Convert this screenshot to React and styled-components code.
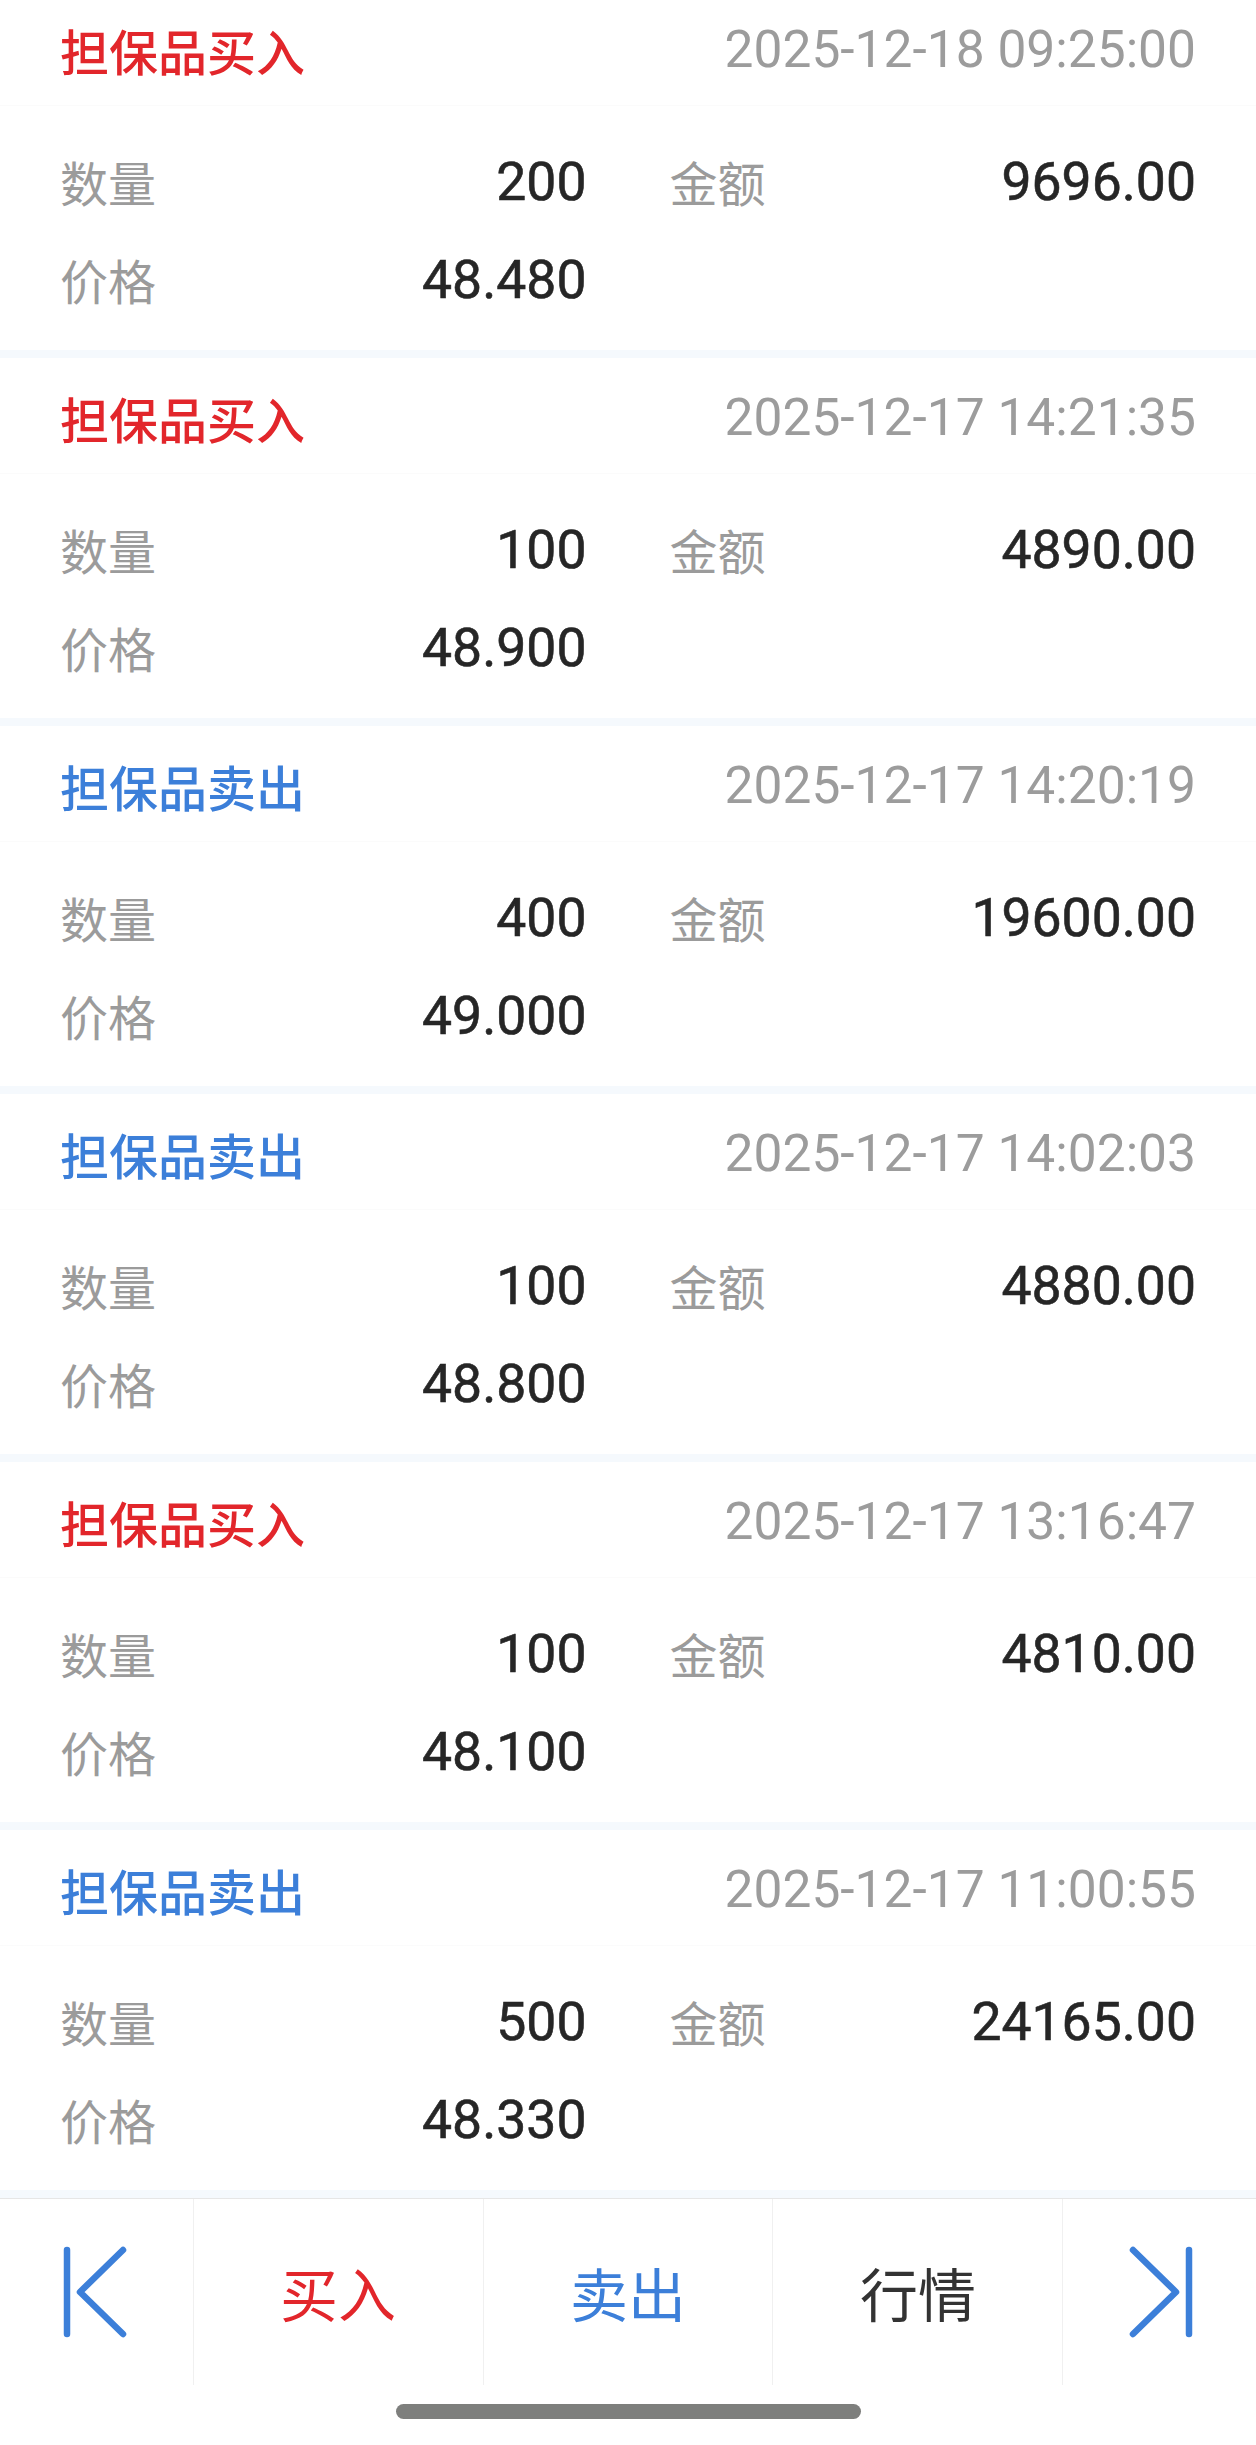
import React from 'react';
import styled, { createGlobalStyle } from 'styled-components';

const RED = '#e2262b';
const BLUE = '#3c7fd9';

const GlobalStyle = createGlobalStyle`
  html, body {
    margin:0;
    padding:0;
    background:#fff;
  }
  body {
    font-family:Roboto, "Noto Sans CJK SC", sans-serif;
  }
`;

const Screen = styled.div`
  width:1256px;
  height:2445px;
  overflow:hidden;
  background:#fff;
  display:flex;
  flex-direction:column;
`;

const List = styled.div`
  margin-top:-10px;
  display:flex;
  flex-direction:column;
  gap:8px;
  padding-bottom:8px;
  background:#f5f9fd;
`;

const Card = styled.div`
  height:360px;
  background:#fff;
  display:flex;
  flex-direction:column;
  box-sizing:border-box;
`;

const CardHead = styled.div`
  height:116px;
  box-sizing:border-box;
  padding:4px 60px 0;
  display:flex;
  align-items:center;
  justify-content:space-between;
  border-bottom:1px solid #fbfbfb;
`;

const Kind = styled.div`
  font-family:"Noto Sans CJK SC", sans-serif;
  font-size:49px;
  font-weight:500;
  color:${p => p.$sell ? BLUE : RED};
`;

const Time = styled.div`
  font-family:Roboto, sans-serif;
  font-size:51.5px;
  color:#9c9c9c;
`;

const CardBody = styled.div`
  padding:26px 60px 0;
  display:grid;
  grid-template-columns:1fr 1fr;
  column-gap:83px;
  grid-auto-rows:98px;
`;

const Field = styled.div`
  display:flex;
  align-items:center;
  justify-content:space-between;
`;

const Label = styled.span`
  font-family:"Noto Sans CJK SC", sans-serif;
  font-size:48px;
  color:#9b9b9b;
`;

const Value = styled.span`
  font-family:Roboto, sans-serif;
  font-size:53.5px;
  font-weight:400;
  color:#262626;
  -webkit-text-stroke:0.6px #262626;
`;

const Footer = styled.div`
  height:187px;
  box-sizing:border-box;
  border-top:1px solid #e6e6e6;
  display:flex;
  background:#fff;
`;

const FootCell = styled.div`
  flex:${p => p.$grow};
  display:flex;
  align-items:center;
  justify-content:center;
  border-left:${p => p.$first ? 'none' : '1px solid #f0f0f0'};
  font-family:"Noto Sans CJK SC", sans-serif;
  font-size:58px;
  color:${p => p.$color || '#333'};
`;

const Bottom = styled.div`
  flex:1;
  display:flex;
  justify-content:center;
  padding-top:19px;
`;

const HomeBar = styled.div`
  width:465px;
  height:15px;
  border-radius:8px;
  background:#7e7f7d;
`;

const records = [
  { sell:false, time:'2025-12-18 09:25:00', qty:'200', amount:'9696.00', price:'48.480' },
  { sell:false, time:'2025-12-17 14:21:35', qty:'100', amount:'4890.00', price:'48.900' },
  { sell:true, time:'2025-12-17 14:20:19', qty:'400', amount:'19600.00', price:'49.000' },
  { sell:true, time:'2025-12-17 14:02:03', qty:'100', amount:'4880.00', price:'48.800' },
  { sell:false, time:'2025-12-17 13:16:47', qty:'100', amount:'4810.00', price:'48.100' },
  { sell:true, time:'2025-12-17 11:00:55', qty:'500', amount:'24165.00', price:'48.330' },
];

const FirstIcon = () => (
  <svg width="66" height="92" viewBox="0 0 66 92" fill="none" stroke={BLUE} strokeWidth="6.5" strokeLinecap="round" strokeLinejoin="round">
    <line x1="4" y1="4" x2="4" y2="88" />
    <polyline points="60,4 17,46 60,88" />
  </svg>
);

const LastIcon = () => (
  <svg width="66" height="92" viewBox="0 0 66 92" fill="none" stroke={BLUE} strokeWidth="6.5" strokeLinecap="round" strokeLinejoin="round">
    <line x1="62" y1="4" x2="62" y2="88" />
    <polyline points="6,4 49,46 6,88" />
  </svg>
);

export default function App() {
  return (
    <Screen>
      <GlobalStyle />
      <List>
        {records.map((r, i) => (
          <Card key={i}>
            <CardHead>
              <Kind $sell={r.sell}>{r.sell ? '担保品卖出' : '担保品买入'}</Kind>
              <Time>{r.time}</Time>
            </CardHead>
            <CardBody>
              <Field><Label>数量</Label><Value>{r.qty}</Value></Field>
              <Field><Label>金额</Label><Value>{r.amount}</Value></Field>
              <Field><Label>价格</Label><Value>{r.price}</Value></Field>
            </CardBody>
          </Card>
        ))}
      </List>
      <Footer>
        <FootCell $grow={2} $first><FirstIcon /></FootCell>
        <FootCell $grow={3} $color={RED}>买入</FootCell>
        <FootCell $grow={3} $color={BLUE}>卖出</FootCell>
        <FootCell $grow={3}>行情</FootCell>
        <FootCell $grow={2}><LastIcon /></FootCell>
      </Footer>
      <Bottom>
        <HomeBar />
      </Bottom>
    </Screen>
  );
}
